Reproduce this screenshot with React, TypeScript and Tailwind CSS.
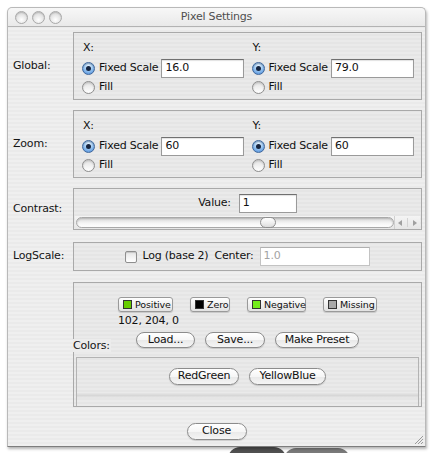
import React from "react";

const Radio = ({ on }: { on: boolean }) =>
  on ? (
    <span className="flex h-[13px] w-[13px] shrink-0 items-center justify-center rounded-full border border-[#3f679c] bg-[radial-gradient(circle_at_50%_30%,#eef7ff_0%,#9cc8f3_45%,#4384d4_100%)] shadow-[inset_0_1px_1px_rgba(0,0,0,0.25)]">
      <span className="h-[5px] w-[5px] rounded-full bg-[#17253f]" />
    </span>
  ) : (
    <span className="h-[13px] w-[13px] shrink-0 rounded-full border border-[#8e8e8e] bg-[linear-gradient(#e2e2e2,#ffffff)] shadow-[inset_0_1px_2px_rgba(0,0,0,0.18)]" />
  );

const Field = ({ value, w, disabled }: { value: string; w: string; disabled?: boolean }) => (
  <div
    className={
      disabled
        ? `${w} flex h-[19px] items-center border border-[#c3c3c3] border-t-[#b0b0b0] bg-white pl-[3px] text-[#a3a3a3]`
        : `${w} flex h-[19px] items-center border border-[#9a9a9a] border-t-[#707070] bg-white pl-[3px] text-[#111] shadow-[inset_0_1px_1px_rgba(0,0,0,0.12)]`
    }
  >
    {value}
  </div>
);

const Pill = ({ children, w, h }: { children: React.ReactNode; w: string; h: string }) => (
  <div
    className={`${w} ${h} flex items-center justify-center rounded-full border border-[#8c8c8c] bg-[linear-gradient(#ffffff,#f6f6f6_50%,#e9e9e9_52%,#f5f5f5)] text-[#111] shadow-[0_1px_1px_rgba(0,0,0,0.15)]`}
  >
    {children}
  </div>
);

const Swatch = ({ color, label, w }: { color: string; label: string; w: string }) => (
  <div
    className={`${w} flex h-[15px] items-center rounded-[3px] border border-[#9a9a9a] bg-[linear-gradient(#ffffff,#eeeeee_55%,#e2e2e2)] pl-[4px] text-[9.5px] tracking-[-0.1px] text-[#111] shadow-[0_1px_1px_rgba(0,0,0,0.15)]`}
  >
    <span className="h-[9px] w-[9px] shrink-0 border border-[#333]" style={{ background: color }} />
    <span className="ml-[3px] leading-none">{label}</span>
  </div>
);

const Axis = ({ axis, value }: { axis: string; value: string }) => (
  <div className="flex w-[170px] flex-col">
    <div className="pl-[1px] leading-[13px]">{axis}:</div>
    <div className="mt-[4px] flex h-[20px] items-center">
      <Radio on />
      <span className="ml-[4px] mr-[3px]">Fixed Scale</span>
      <Field value={value} w="w-[83px]" />
    </div>
    <div className="mt-[1px] flex h-[16px] items-center">
      <Radio on={false} />
      <span className="ml-[4px]">Fill</span>
    </div>
  </div>
);

const Row = ({
  label,
  box,
  children,
  mt,
}: {
  label: string;
  box: string;
  children: React.ReactNode;
  mt: string;
}) => (
  <div className={`${mt} flex items-center`}>
    <div className="w-[65px] shrink-0 pl-[5px] text-[#151515]">{label}</div>
    <div className={`${box} w-[349px] shrink-0 border border-[#a9a9a9] bg-[rgba(0,0,0,0.018)]`}>{children}</div>
  </div>
);

export default function App() {
  return (
    <div className="relative h-[453px] w-[436px] overflow-hidden bg-white font-['DejaVu_Sans','Liberation_Sans',sans-serif] text-[11px] tracking-[-0.2px] text-[#111]">
      {/* things behind the window at the bottom */}
      <div className="absolute left-[228px] top-[447px] h-[12px] w-[58px] rounded-t-[20px] bg-[#505050]" />
      <div className="absolute left-[284px] top-[448px] h-[12px] w-[66px] rounded-t-[20px] bg-[#7a7a7a]" />

      <div className="relative ml-[7px] mt-[7px] flex h-[440px] w-[419px] flex-col rounded-t-[5px] border border-[#b9b9b9] border-b-[#7d7d7d] bg-[image:repeating-linear-gradient(180deg,#efefef_0px,#efefef_2px,#eaeaea_2px,#eaeaea_4px)] shadow-[1px_2px_3px_rgba(0,0,0,0.3)]">
        {/* title bar */}
        <div className="relative flex h-[19px] shrink-0 items-center rounded-t-[5px] border-b border-[#b3b3b3] bg-[linear-gradient(#f7f7f7,#e9e9e9)] pl-[7px]">
          <div className="flex gap-[4px]">
            {[0, 1, 2].map((i) => (
              <span
                key={i}
                className="h-[13px] w-[13px] rounded-full border border-[#a9a9a9] bg-[radial-gradient(circle_at_50%_70%,#ffffff,#e4e4e4_55%,#cfcfcf)] shadow-[inset_0_1px_1px_rgba(0,0,0,0.15)]"
              />
            ))}
          </div>
          <div className="absolute inset-0 flex items-center justify-center text-[#4f4f4f]">Pixel Settings</div>
        </div>

        <Row label="Global:" box="h-[68px] pt-[8px] pl-[8px] flex" mt="mt-[5px]">
          <Axis axis="X" value="16.0" />
          <Axis axis="Y" value="79.0" />
        </Row>

        <Row label="Zoom:" box="h-[68px] pt-[8px] pl-[8px] flex" mt="mt-[10px]">
          <Axis axis="X" value="60" />
          <Axis axis="Y" value="60" />
        </Row>

        <Row label="Contrast:" box="h-[42px] flex flex-col" mt="mt-[10px]">
          <div className="mt-[5px] flex h-[19px] items-center justify-center gap-[8px]">
            <span>Value:</span>
            <Field value="1" w="w-[58px]" />
          </div>
          <div className="mx-[1px] mt-auto flex h-[13px] items-stretch bg-[linear-gradient(#f4f4f4,#e6e6e6)]">
            <div className="relative my-[1px] ml-[1px] flex-1 rounded-full border border-[#a9a9a9] bg-[linear-gradient(#d9d9d9,#f6f6f6_60%,#ffffff)] shadow-[inset_0_1px_2px_rgba(0,0,0,0.18)]">
              <div className="absolute left-[183px] top-[-1px] h-[11px] w-[16px] rounded-full border border-[#8e8e8e] bg-[linear-gradient(#ffffff,#ececec_60%,#dcdcdc)]" />
            </div>
            <div className="flex w-[26px] items-center justify-center gap-[5px] border-l border-[#d0d0d0]">
              <svg width="4" height="6" viewBox="0 0 4 6">
                <path d="M4 0 L0 3 L4 6 Z" fill="#a0a0a0" />
              </svg>
              <span className="h-[9px] w-px bg-[#d3d3d3]" />
              <svg width="4" height="6" viewBox="0 0 4 6">
                <path d="M0 0 L4 3 L0 6 Z" fill="#a0a0a0" />
              </svg>
            </div>
          </div>
        </Row>

        <Row label="LogScale:" box="h-[29px] flex items-center justify-center" mt="mt-[12px]">
          <span className="h-[12px] w-[12px] rounded-[2px] border border-[#8e8e8e] bg-[linear-gradient(#e4e4e4,#ffffff)] shadow-[inset_0_1px_1px_rgba(0,0,0,0.15)]" />
          <span className="ml-[5px]">Log (base 2)</span>
          <span className="ml-[6px]">Center:</span>
          <div className="ml-[6px]">
            <Field value="1.0" w="w-[110px]" disabled />
          </div>
        </Row>

        <Row label="" box="relative h-[125px] flex flex-col" mt="mt-[11px]">
          <div className="flex justify-center pt-[14px]">
            <div className="flex flex-col">
              <div className="flex gap-[17px]">
                <Swatch color="#66cc00" label="Positive" w="w-[55px]" />
                <Swatch color="#000000" label="Zero" w="w-[40px]" />
                <Swatch color="#74ec1c" label="Negative" w="w-[59px]" />
                <Swatch color="#a8a8a8" label="Missing" w="w-[54px]" />
              </div>
              <div className="mt-[2px] leading-[13px]">102, 204, 0</div>
            </div>
          </div>
          <div className="mt-[5px] flex justify-center gap-[10px]">
            <Pill w="w-[59px]" h="h-[16px]">Load...</Pill>
            <Pill w="w-[60px]" h="h-[16px]">Save...</Pill>
            <Pill w="w-[84px]" h="h-[16px]">Make Preset</Pill>
          </div>
          <div className="absolute left-[-1px] top-[56px] bg-[#ececec] pr-[1px] leading-[13px] text-[#151515]">Colors:</div>
          <div className="mx-[2px] mt-[9px] flex flex-1 flex-col border-x border-t border-[#b3b3b3]">
            <div className="mt-[10px] flex justify-center gap-[10px]">
              <Pill w="w-[70px]" h="h-[17px]">RedGreen</Pill>
              <Pill w="w-[77px]" h="h-[17px]">YellowBlue</Pill>
            </div>
            <div className="mt-[8px] h-[5px] bg-[linear-gradient(#e6e6e6,#d7d7d7,#e9e9e9)]" />
          </div>
        </Row>

        <div className="mt-[16px] flex justify-center">
          <Pill w="w-[60px]" h="h-[17px]">Close</Pill>
        </div>

        <svg className="absolute bottom-[1px] right-[1px]" width="11" height="11" viewBox="0 0 11 11">
          <path d="M10 2 L2 10 M10 5 L5 10 M10 8 L8 10" stroke="#9a9a9a" strokeWidth="1" />
        </svg>
      </div>
    </div>
  );
}
